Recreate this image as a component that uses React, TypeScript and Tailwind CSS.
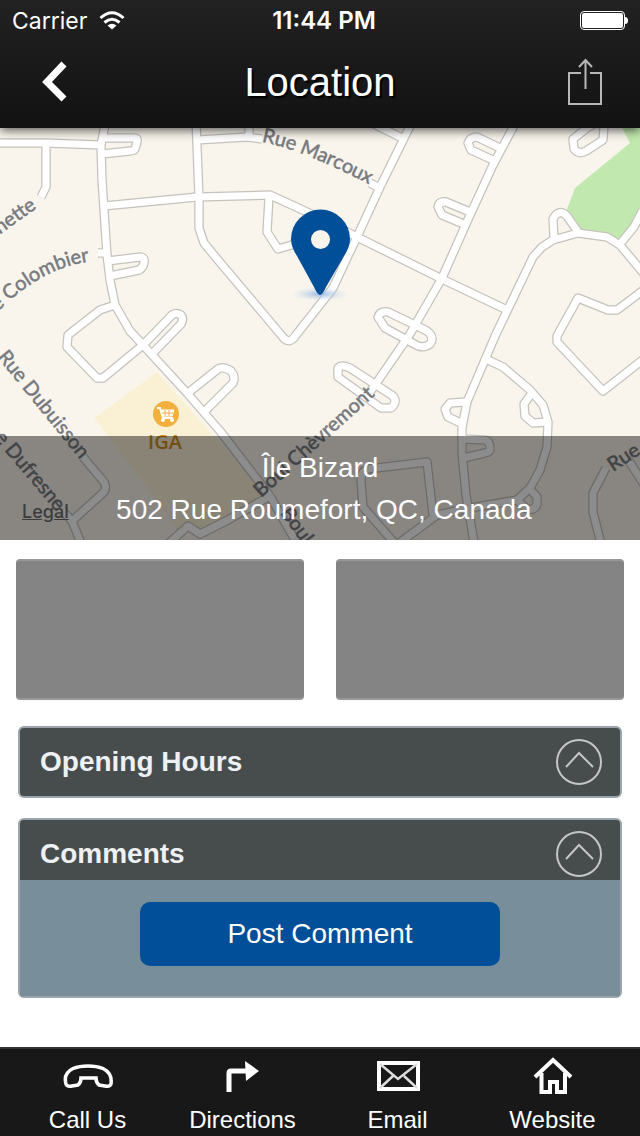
import { useState } from 'react'
import type { ReactNode } from 'react'

const ROADS = [
  'M-5 143 L45 143 L102 145',
  'M46 144 L46 187 L41 197',
  'M106 120 L101 145 L102 180 L107 255 L110 280 L115 305 L130 331 L143 345 L187 393 L220 431 L270 496',
  'M102 138 L135 138 Q138 138 137 142 L135 149 Q134 151 130 151 L102 154',
  'M104 206 L197 197 L270 195 L307 212 L357 237 L442 279 L505 309',
  'M196 120 L199 197 L199 228 L204 243 L218 260 L282 336 Q289 346 296 335 L333 288 L347 258 L357 237 L380 187 L413 120',
  'M197 140 L247 137 L262 139',
  'M249 120 L249 137',
  'M370 183 L378 187',
  'M368 121 L404 139',
  'M269 197 L267 232 L278 249 L292 245 L310 228',
  'M98 253 L106 253',
  'M107 261 L141 257 Q145 258 144 263 Q143 268 139 270 L110 276',
  'M115 305 L100 310 L68 335 L67 347 L97 378 L103 378 L143 345',
  'M143 345 L172 315 Q176 312 181 315 Q184 319 181 324 L152 354',
  'M188 393 L218 369 Q223 366 231 371 Q236 377 233 383 L205 411',
  'M378 317 Q380 311 388 312 L413 324 L427 331 Q435 337 430 344 Q425 348 418 346 L385 328 Z',
  'M338 368 Q341 364 350 368 L393 396 Q398 402 391 408 L381 408 L338 377 Z',
  'M517 120 L493 165 L470 215 L442 278 L410 334 L375 385 L370 392',
  'M500 148 L477 137 Q470 137 468 143 L471 150 L495 161',
  'M470 212 L446 202 Q439 201 438 207 L442 215 L466 225',
  'M587 128 L573 139 L574 149 Q579 155 586 151 L603 140 L604 126 L597 122 Z',
  'M496 334 L533 257 L542 247 L553 240 L578 233 L607 237 L620 245 L645 275',
  'M620 244 L634 227 L643 210',
  'M554 238 L553 219 Q559 208 567 216 L578 232',
  'M645 289 L617 310 L608 310 L578 298 L557 336 L557 342 L603 391 L645 358',
  'M496 334 L467 402 L462 427 L462 453 L466 495 L475 548',
  'M467 402 L450 403 L445 409 L448 417 L463 424',
  'M462 439 L485 440 Q490 441 490 449 Q490 452 485 453 L463 458',
  'M488 360 L503 367 L530 390 L543 405 L548 422 L547 447 L540 470 L530 488 L517 500 L470 508 L437 515 L395 546',
  'M532 393 L524 404 L525 416 L533 423 L548 422',
  'M529 488 L537 497 L537 504 Q535 511 527 509 L517 500',
  'M397 546 L363 507 L361 480 Q361 471 368 469 L427 462 L433 515',
  'M602 548 L593 512 L593 493 L606 468',
  'M627 458 L645 486',
  'M83 457 L104 482 Q107 487 104 492 L72 521 L83 548',
  'M72 521 L62 510',
  'M168 544 L188 526 L200 534 L228 520 L270 496',
  'M270 496 L295 540',
]

const LABELS = [
  { id: 'rochette', d: 'M-8 240 L62 190', text: 'chette' },
  { id: 'colombier', d: 'M-10 320 Q44 260 110 260', text: 'de Colombier' },
  { id: 'marcoux', d: 'M262 142 Q305 150 380 190', text: 'Rue Marcoux' },
  { id: 'dubuisson', d: 'M-3 357 L100 484', text: 'Rue Dubuisson' },
  { id: 'dufresne', d: 'M-6 438 L70 528', text: 'e Dufresne' },
  { id: 'chevremont', d: 'M261 498 L390 382', text: 'Boul Chèvremont' },
  { id: 'boul', d: 'M280 513 L333 586', text: 'Boul' },
  { id: 'rue', d: 'M613 472 L700 415', text: 'Rue' },
]

function Map() {
  return (
    <svg viewBox="0 128 640 412" className="block w-full h-auto bg-[#f9f5ed]" role="img" aria-label="Map">
      <defs>
        <radialGradient id="pin-glow">
          <stop offset="0" stopColor="#8fb4de" stopOpacity="0.9" />
          <stop offset="1" stopColor="#c9d8ea" stopOpacity="0" />
        </radialGradient>
      </defs>
      <path d="M622 128 L630 143 L575 188 L566 212 L580 234 L618 241 L640 212 V128 Z" fill="#c1e9af" />
      <path d="M157 372 L94 418 L143 482 L178 530 L205 530 L268 497 Z" fill="#faf1d5" />
      <g fill="none" strokeLinejoin="round">
        {ROADS.map((d) => (
          <path key={d} d={d} stroke="#c6c2bc" strokeWidth="9.500" />
        ))}
        {ROADS.map((d) => (
          <path key={d} d={d} stroke="#fff" strokeWidth="7" />
        ))}
      </g>
      <g
        fill="#777a80"
        stroke="#777a80"
        strokeWidth="0.500"
        className="font-['Lato','Open_Sans',sans-serif] text-[20px]"
      >
        {LABELS.map((label) => (
          <g key={label.id}>
            <path id={label.id} d={label.d} fill="none" stroke="none" />
            <text>
              <textPath href={`#${label.id}`}>{label.text}</textPath>
            </text>
          </g>
        ))}
      </g>
      <circle cx="166" cy="414" r="13" fill="#f3b03c" />
      <g fill="none" stroke="#fff" strokeWidth="2">
        <path d="M157 408 H160 L163 418 H173" />
        <path d="M161 410 H174 L172 416 H163 Z" fill="#fff" strokeWidth="1" />
        <path d="M165 410 V416 M169 410 V416 M162 413 H173" stroke="#f3b03c" strokeWidth="1" />
      </g>
      <circle cx="163" cy="420" r="2" fill="#fff" />
      <circle cx="172" cy="420" r="2" fill="#fff" />
      <text
        x="165"
        y="449"
        textAnchor="middle"
        fill="#d08f22"
        className="font-['Open_Sans','Lato',sans-serif] text-[20px] font-semibold"
      >
        IGA
      </text>
      <ellipse cx="320" cy="294" rx="28" ry="7" fill="url(#pin-glow)" />
      <path
        fillRule="evenodd"
        d="M320 295 Q317 294 314 287 L297 256 Q291 247 291 239 A29 29 0 0 1 350 239 Q350 247 344 256 L326 287 Q323 294 320 295 Z M320.500 230 A9.500 9.500 0 1 0 320.500 249 A9.500 9.500 0 1 0 320.500 230 Z"
        fill="#004f98"
      />
    </svg>
  )
}

function StatusBar() {
  return (
    <div className="grid grid-cols-3 items-center h-10 pt-0.5 px-3 font-['Inter',sans-serif] text-[23px]">
      <div className="flex items-center gap-3">
        <span>Carrier</span>
        <svg width="26" height="20" viewBox="0 0 26 20" fill="none" stroke="#fff" strokeWidth="3">
          <path d="M1.500 7 Q13 -3.500 24.500 7" />
          <path d="M5.500 11.500 Q13 5 20.500 11.500" />
          <path d="M13 18.500 L8.500 14.500 Q13 11 17.500 14.500 Z" fill="#fff" stroke="none" />
        </svg>
      </div>
      <span className="pl-2 text-center text-2xl font-semibold whitespace-nowrap">11:44 PM</span>
      <svg className="justify-self-end" width="48" height="20" viewBox="0 0 48 20">
        <rect x="0.500" y="0.500" width="44" height="18" rx="3.500" fill="none" stroke="#fff" />
        <rect x="2" y="2" width="41" height="15" rx="2" fill="#fff" />
        <path d="M45 6 Q48 6 48 9.500 Q48 13 45 13 Z" fill="#fff" />
      </svg>
    </div>
  )
}

interface PanelProps {
  title: string
  children?: ReactNode
}

function Panel({ title, children }: PanelProps) {
  const [isOpen, setIsOpen] = useState(true)

  return (
    <section className="rounded-md border-2 border-[#9ba5a9] bg-[#474c4d] overflow-hidden">
      <button
        onClick={() => setIsOpen(!isOpen)}
        aria-expanded={isOpen}
        className={`flex w-full items-center justify-between pl-5 pr-4 text-[28px] font-bold text-[#eef1f4] ${
          children ? 'h-[60px] pt-2' : 'h-[68px]'
        }`}
      >
        {title}
        <svg width="48" height="48" viewBox="0 0 48 48" fill="none" stroke="#c4c6c7" strokeWidth="2">
          <circle cx="23" cy="24" r="22" />
          <path d="M10 29 L23 15 L37 29" />
        </svg>
      </button>
      {isOpen && children && <div className="bg-[#788f9b] px-[120px] pt-[22px] pb-[30px]">{children}</div>}
    </section>
  )
}

interface TabProps {
  label: string
  children: ReactNode
}

function Tab({ label, children }: TabProps) {
  return (
    <button className="flex flex-col items-center pt-[7px] text-2xl text-white">
      <svg width="54" height="44" viewBox="0 0 54 44" fill="none" stroke="#fff">
        {children}
      </svg>
      <span className="whitespace-nowrap pt-1">{label}</span>
    </button>
  )
}

export default function App() {
  return (
    <div className="flex flex-col min-h-screen bg-white font-['Liberation_Sans',Arial,sans-serif]">
      <header className="relative z-10 bg-linear-to-b from-[#222] to-[#121212] text-white shadow-[0_2px_10px_rgba(0,0,0,0.7)]">
        <StatusBar />
        <div className="flex items-center justify-between h-[88px] px-8 pb-1">
          <button aria-label="Back" className="w-12">
            <svg width="44" height="44" viewBox="0 0 44 44" fill="none" stroke="#fff" strokeWidth="7">
              <path d="M32 4 L15 22 L32 39" />
            </svg>
          </button>
          <h1 className="text-[40px] leading-none [text-shadow:2px_2px_1px_#000]">Location</h1>
          <button aria-label="Share" className="flex w-12 justify-end">
            <svg width="44" height="48" viewBox="0 0 44 48" fill="none" stroke="#b8b8b8" strokeWidth="2">
              <path d="M17 15 H5 V46 H37 V15 H26" />
              <path d="M21.500 31 V2 M15 9 L21.500 2 L28 9" />
            </svg>
          </button>
        </div>
      </header>

      <div className="relative">
        <Map />
        <div className="absolute inset-x-0 bottom-0 h-[104px] bg-black/45 pt-[11px] text-center text-[28px] leading-[42px] text-white">
          <p>Île Bizard</p>
          <p>&nbsp;502 Rue Roumefort, QC, Canada</p>
          <a
            href="#legal"
            className="absolute left-[22px] bottom-4 font-['Inter',sans-serif] text-[18px] leading-6 font-medium text-[#3c3c3c] underline"
          >
            Legal
          </a>
        </div>
      </div>

      <main className="flex flex-col grow pt-[19px] pb-10">
        <div className="grid grid-cols-2 gap-8 px-4">
          <div className="h-[141px] rounded-sm border-y-2 border-[#979797] bg-[#848484]" />
          <div className="h-[141px] rounded-sm border-y-2 border-[#979797] bg-[#848484]" />
        </div>
        <div className="flex flex-col gap-5 px-[18px] pt-[26px]">
          <Panel title="Opening Hours" />
          <Panel title="Comments">
            <button className="w-full h-16 rounded-[10px] bg-[#004f98] text-[28px] text-white">Post Comment</button>
          </Panel>
        </div>
      </main>

      <nav className="grid grid-cols-4 h-[89px] px-[10px] border-t-2 border-[#333] bg-[#181818]">
        <Tab label="Call Us">
          <path
            d="M5 28 C3 21 5 16 12 12.500 C20 9 34 9 42 12.500 C49 16 51 21 50 28 Q49 31 44 30 L38 29 Q35 27 35 22 H20 Q20 27 17 29 L11 30 Q6 31 5 28 Z"
            strokeWidth="3.500"
          />
        </Tab>
        <Tab label="Directions">
          <path d="M13 36 V17 Q13 15 15 15 H32" strokeWidth="5" />
          <path d="M29 5 L43 15 L30 25 Z" fill="#fff" strokeWidth="0" />
        </Tab>
        <Tab label="Email">
          <path d="M8 7 H47 V33 H8 Z" strokeWidth="4" />
          <path d="M9 8 L27 23 L46 8 M9 32 L22 20 M46 32 L33 20" strokeWidth="2.500" stroke="#ddd" />
        </Tab>
        <Tab label="Website">
          <path d="M9 21 L27 4 L45 21" strokeWidth="4" />
          <path d="M15.500 17 V36 H24 V26 H31 V36 H39 V17" strokeWidth="4" />
        </Tab>
      </nav>
    </div>
  )
}
